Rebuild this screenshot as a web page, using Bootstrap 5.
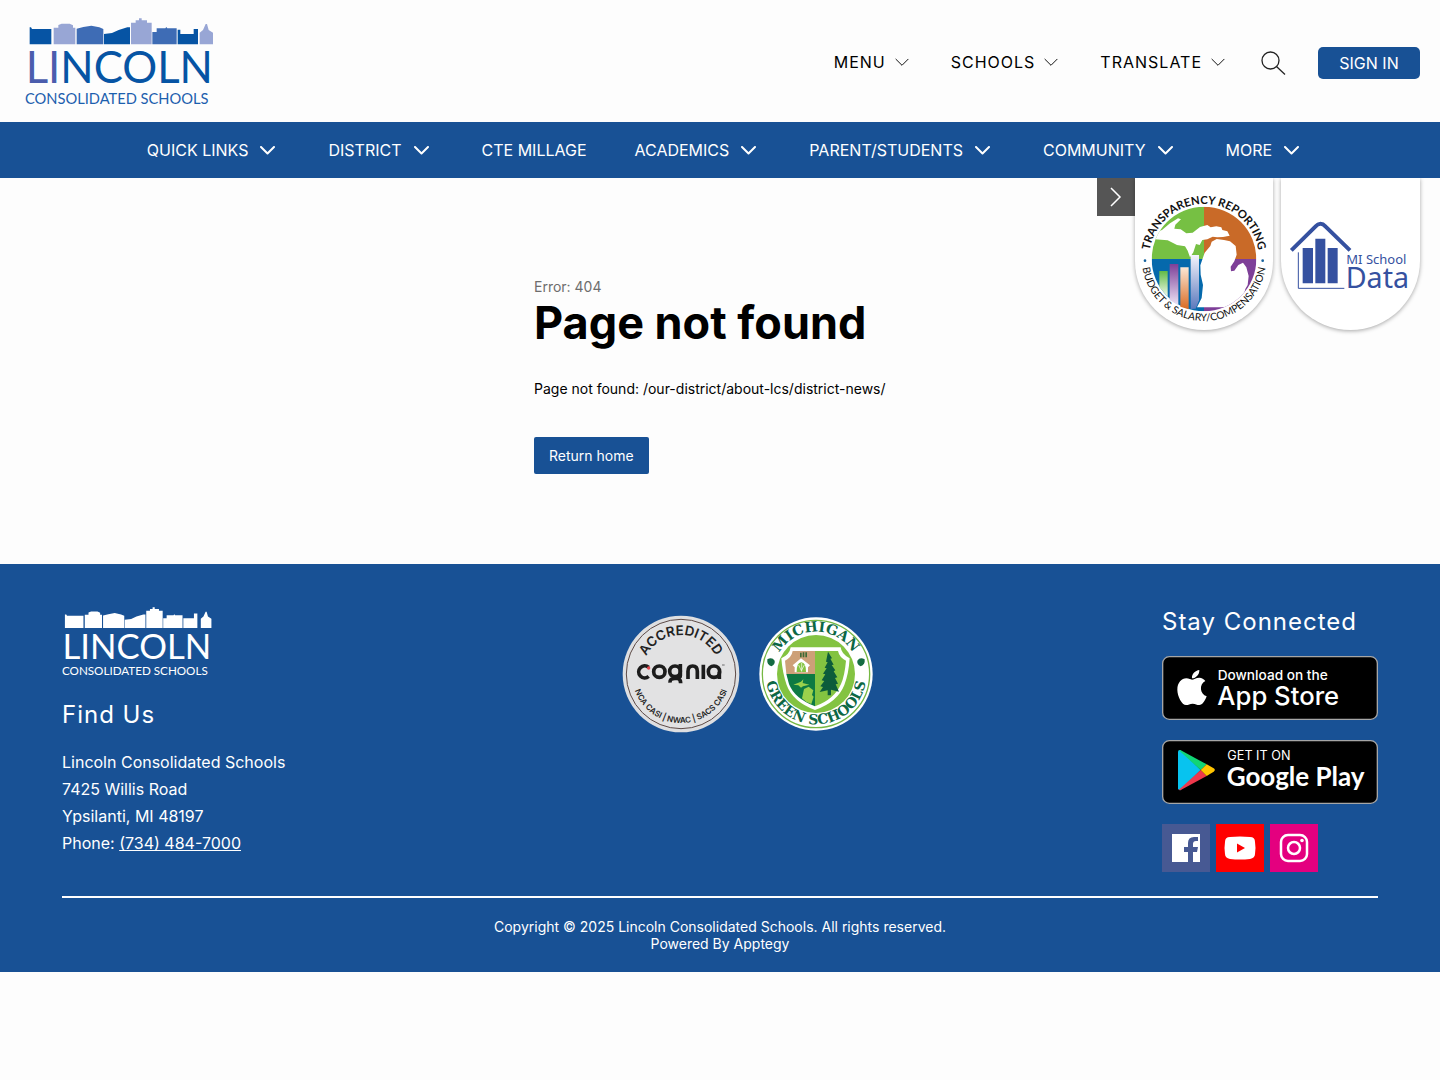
<!DOCTYPE html>
<html lang="en">
<head>
<meta charset="utf-8">
<meta name="viewport" content="width=device-width, initial-scale=1">
<title>Page not found | Lincoln Consolidated Schools</title>
<link href="https://cdn.jsdelivr.net/npm/bootstrap@5.3.0/dist/css/bootstrap.min.css" rel="stylesheet">
<style>
  :root { --brand: #185195; }
  body { font-family: Inter, "Liberation Sans", sans-serif; color: #000; background: #fdfdfd; }
  svg { display: block; flex: none; }
  .bg-brand { background: var(--brand); }
  .site-top { min-height: 122px; padding: 18px 20px 16px 25px; }
  .top-link { letter-spacing: 1px; line-height: 24px; color: #000; gap: 9px; }
  .top-tools { gap: 42px; }
  .tool-end { gap: 32px; margin-left: -6px; padding-top: 2px; }
  .btn-sign { background: var(--brand); color: #fff; border: 0; border-radius: 5px; width: 102px; height: 32px; padding: 0; }
  .site-nav { min-height: 56px; padding-left: 6px; }
  .site-nav ul { gap: 12px 48px; }
  .site-nav a { color: #fff; gap: 12px; line-height: 24px; }
  .site-nav .has-menu { margin-right: 5px; }
  .site-nav .has-menu:last-child { margin-right: 0; }
  .drawer { right: 20px; top: 0; }
  .drawer-toggle { width: 38px; height: 38px; background: #555; border: 0; padding: 0; }
  .drawer-card { background: #fff; border-radius: 0 0 70px 70px; box-shadow: 0 1px 4px rgba(0,0,0,.35); overflow: hidden; clip-path: inset(0 -8px -8px -8px); }
  .error-area { min-height: 386px; padding-top: 100px; }
  .error-box { width: 372px; font-size: 14px; line-height: 18px; }
  .error-code { color: #6d6d6d; }
  .error-box h1 { font-size: 45px; line-height: 54px; font-weight: 700; margin: 0 0 30px; }
  .error-box p { margin-bottom: 39px; }
  .btn-home { background: var(--brand); color: #fff; font-size: 14px; line-height: 21px; padding: 8px 15px; border: 0; border-radius: 2px; }
  .site-foot { padding: 43px 62px 20px; color: #fff; }
  .site-foot h2 { font-size: 24px; line-height: 30px; font-weight: 400; letter-spacing: 1px; margin: 0; }
  .find-us { width: 324px; }
  .find-us h2 { margin: 23px 0 19px; }
  .find-us address { line-height: 27px; margin: 0; }
  .connect { width: 216px; }
  .store-link { margin: 19px 0 20px; }
  .store-link + .store-link { margin-top: 0; }
  .socials { gap: 6px; }
  .seals { gap: 19px; margin-right: 53px; padding-top: 8px; }
  .rule { border-top: 2px solid #fff; margin-top: 24px; padding-top: 20px; font-size: 14px; line-height: 17px; }
  .lato { font-family: Lato, sans-serif; }
</style>
</head>
<body>
<svg width="0" height="0" class="position-absolute" aria-hidden="true">
  <symbol id="chev" viewBox="0 0 15 9"><path d="M1 1l6.500 6.500L14 1" fill="none" stroke="currentColor" stroke-linecap="round" stroke-linejoin="round"/></symbol>
</svg>

<header class="site-top d-flex flex-wrap align-items-center justify-content-between">
  <a href="#" aria-label="Lincoln Consolidated Schools">
    <svg width="190" height="88" viewBox="45 24 570 264">
      <path fill="#0654a4" d="M59 52h4l3 5h58v46H59zM282 103V72l24-3 20-9 26-8h8v51zM503 59h8v13h40V57h13v46h-61z"/>
      <path fill="#98a6d5" d="M131 103V53h14v-8l10-4h24l10 5v7h7v50zM363 103V38h14v-7h10v-6h8v6h16v7h14v65zM569 103V68l10-8 8-18h4l5 18 13 8v35z"/>
      <path fill="#3e6cb5" d="M200 103V56l20-5 24-4 24 5 12 5v46zM427 103V66h13V55h26l3-4 3 4h28v48z"/>
      <g class="lato" font-size="131"><text x="47" y="219" fill="#0654a4"><tspan fill="#4b5dad">LI</tspan>NCOLN</text></g>
      <text class="lato" x="45" y="281" font-size="44" fill="#1c5fae">CONSOLIDATED SCHOOLS</text>
    </svg>
  </a>
  <div class="top-tools d-flex flex-wrap align-items-center">
    <a href="#" class="top-link d-flex align-items-center text-decoration-none">MENU <svg width="14" height="9" stroke-width="1"><use href="#chev"/></svg></a>
    <a href="#" class="top-link d-flex align-items-center text-decoration-none">SCHOOLS <svg width="14" height="9" stroke-width="1"><use href="#chev"/></svg></a>
    <a href="#" class="top-link d-flex align-items-center text-decoration-none">TRANSLATE <svg width="14" height="9" stroke-width="1"><use href="#chev"/></svg></a>
    <div class="tool-end d-flex align-items-center">
      <button type="button" class="btn p-0 border-0" aria-label="Search"><svg width="25" height="24" viewBox="0 0 25 24" fill="none" stroke="#222" stroke-width="1.300"><circle cx="9.500" cy="9.500" r="8.500"/><path d="M15.500 15.500L24 23.500"/></svg></button>
      <button type="button" class="btn-sign">SIGN IN</button>
    </div>
  </div>
</header>

<nav class="site-nav bg-brand d-flex align-items-center justify-content-center" aria-label="Main">
  <ul class="list-unstyled d-flex flex-wrap justify-content-center m-0">
    <li class="has-menu"><a href="#" class="d-flex align-items-center text-decoration-none">QUICK LINKS <svg width="15" height="9" stroke-width="2"><use href="#chev"/></svg></a></li>
    <li class="has-menu"><a href="#" class="d-flex align-items-center text-decoration-none">DISTRICT <svg width="15" height="9" stroke-width="2"><use href="#chev"/></svg></a></li>
    <li><a href="#" class="d-flex align-items-center text-decoration-none">CTE MILLAGE</a></li>
    <li class="has-menu"><a href="#" class="d-flex align-items-center text-decoration-none">ACADEMICS <svg width="15" height="9" stroke-width="2"><use href="#chev"/></svg></a></li>
    <li class="has-menu"><a href="#" class="d-flex align-items-center text-decoration-none">PARENT/STUDENTS <svg width="15" height="9" stroke-width="2"><use href="#chev"/></svg></a></li>
    <li class="has-menu"><a href="#" class="d-flex align-items-center text-decoration-none">COMMUNITY <svg width="15" height="9" stroke-width="2"><use href="#chev"/></svg></a></li>
    <li class="has-menu"><a href="#" class="d-flex align-items-center text-decoration-none">MORE <svg width="15" height="9" stroke-width="2"><use href="#chev"/></svg></a></li>
  </ul>
</nav>

<main class="error-area position-relative d-flex justify-content-center align-items-start">
  <div class="error-box">
    <div class="error-code">Error: 404</div>
    <h1>Page not found</h1>
    <p>Page not found: /our-district/about-lcs/district-news/</p>
    <a href="#" class="btn btn-home">Return home</a>
  </div>

  <aside class="drawer position-absolute d-flex align-items-start" aria-label="Reporting links">
    <button type="button" class="drawer-toggle d-flex align-items-center justify-content-center" aria-label="Hide links"><svg width="12" height="20" viewBox="0 0 12 20" fill="none" stroke="#fff" stroke-width="1.500"><path d="M1 1l9 9-9 9"/></svg></button>
    <a href="#" class="drawer-card me-2" aria-label="Transparency Reporting">
      <svg width="138" height="152" viewBox="135 24 414 456">
        <defs>
          <clipPath id="disc"><circle cx="342" cy="267" r="157"/></clipPath>
          <linearGradient id="g1" x2="0" y2="1"><stop stop-color="#62bb46"/><stop offset="1" stop-color="#f3faed"/></linearGradient>
          <linearGradient id="g2" x2="0" y2="1"><stop stop-color="#7d3f98"/><stop offset="1" stop-color="#eee4f5"/></linearGradient>
          <linearGradient id="g3" x2="0" y2="1"><stop stop-color="#fbe7d5"/><stop offset="1" stop-color="#d96a22"/></linearGradient>
          <linearGradient id="g4" x2="0" y2="1"><stop stop-color="#f4f4fc"/><stop offset="1" stop-color="#5b79bd"/></linearGradient>
          <path id="arcTop" d="M177 267a165 165 0 0 1 330 0"/>
          <path id="arcBottom" d="M156 267a186 186 0 0 0 372 0"/>
        </defs>
        <g clip-path="url(#disc)">
          <path fill="#76c043" d="M185 110h157v157H185z"/><path fill="#c96a28" d="M342 110h157v157H342z"/>
          <path fill="#0569ac" d="M185 267h157v157H185z"/><path fill="#7e3f98" d="M342 267h157v157H342z"/>
          <path fill="#fff" d="M185 207l3-18 28-9 24-20 24-15 9 3-17 16-3 12 19 2 17 12 19-2 22-17 22-6 10 7 17-3 15 3 3 8 15 4 7 13-20 4-17 1-14-2-16 8-15 2-8 15-11-3-8 25-10 15-7-20-8-13-24-4-28-14z"/>
          <path fill="#fff" d="M344 248l17-20 4-13 15-8 22 3 18 4 17 14 3 26-7 20-11 16 1 14 10-2 12-17 14-7 10 14 7 26-3 27-7 12-8 31-13 22-29 2H321l14-28 4-39-7-31-1-28z"/>
        </g>
        <path fill="url(#g1)" d="M208 303h25v78l-25-30z"/><path fill="url(#g2)" d="M239 282h26v124l-26-16z"/><path fill="url(#g3)" d="M271 292h25v126l-25-8z"/><path fill="url(#g4)" d="M302 255h25v136l-10 25-15 1z"/>
        <g class="lato" text-anchor="middle" fill="#111"><text font-size="34" font-weight="700"><textPath href="#arcTop" startOffset="50%">TRANSPARENCY REPORTING</textPath></text>
        <text font-size="31"><textPath href="#arcBottom" startOffset="50%">BUDGET &amp; SALARY/COMPENSATION</textPath></text></g>
        <circle cx="165" cy="272" r="4" fill="#17639f"/><circle cx="518" cy="272" r="4" fill="#17639f"/>
      </svg>
    </a>
    <a href="#" class="drawer-card" aria-label="MI School Data">
      <svg width="139" height="152" viewBox="573 24 417 456" fill="#3551a0">
        <path d="M604 241l72-71q15-17 31 0l73 71" fill="none" stroke="#3551a0" stroke-width="12"/>
        <path d="M638 234h31v106h-31zM676 206h30v134h-30zM713 234h30v106h-30z"/><path d="M625 247v108h138" fill="none" stroke="#3551a0" stroke-width="3"/>
        <g font-family="Noto Sans, sans-serif"><text x="769" y="282" font-size="39">MI School</text><text x="767" y="353" font-size="86">Data</text></g>
      </svg>
    </a>
  </aside>
</main>

<footer class="site-foot bg-brand">
  <div class="d-flex flex-wrap justify-content-between align-items-start">
    <section class="find-us">
      <svg width="151" height="70" viewBox="45 24 570 264" fill="#fff" role="img" aria-label="Lincoln Consolidated Schools">
        <path d="M56 52h5l3 5h62v46H56zM282 103V72l24-3 20-9 26-8h8v51zM503 66h40V48h13v55h-53zM131 103V53h14v-8l10-4h24l10 5v7h7v50zM363 103V38h14v-7h10v-6h8v6h16v7h14v65zM569 103V68l10-8 8-18h4l5 18 13 8v35zM200 103V56l20-5 24-4 24 5 12 5v46zM427 103V66h13V55h26l3-4 3 4h28v48z"/>
        <text class="lato" x="47" y="219" font-size="131">LINCOLN</text>
        <text class="lato" x="45" y="281" font-size="44">CONSOLIDATED SCHOOLS</text>
      </svg>
      <h2>Find Us</h2>
      <address>Lincoln Consolidated Schools<br>7425 Willis Road<br>Ypsilanti, MI 48197<br>Phone: <a href="tel:7344847000" class="text-white">(734) 484-7000</a></address>
    </section>

    <section class="seals d-flex align-items-center" aria-label="Accreditations">
      <svg width="118" height="118" viewBox="39 30 354 354">
        <defs><path id="cogTop" d="M99 207a117 117 0 0 1 234 0"/><path id="cogBottom" d="M69 207a147 147 0 0 0 294 0"/></defs>
        <circle cx="216" cy="207" r="175" fill="#dedfe1"/><circle cx="216" cy="207" r="164" fill="#e2e2e3" stroke="#5d4a46" stroke-width="3"/>
        <g font-family="Inter, sans-serif" text-anchor="middle" fill="#222"><text font-size="40" font-weight="600"><textPath href="#cogTop" startOffset="50%">ACCREDITED</textPath></text>
        <text font-size="24" font-weight="600"><textPath href="#cogBottom" startOffset="50%">NCA CASI | NWAC | SACS CASI</textPath></text></g>
        <g fill="none" stroke="#1c1c1c" stroke-width="11"><path d="M119 187a18 18 0 1 0 0 27"/><circle cx="151" cy="200" r="17"/><circle cx="198" cy="199" r="16"/><path d="M214 177v35q0 8-16 8t-15 13M206 220q9 3 9 15M237 222v-23q0-16 14-16t14 16v23M283 179v43M331 200v22"/><circle cx="315" cy="200" r="17"/></g>
        <circle cx="119" cy="189" r="5" fill="#e6444c"/><path d="M339 180h8" stroke="#333" stroke-width="2"/>
      </svg>
      <svg width="114" height="114" viewBox="449 33 342 342">
        <defs><path id="grTop" d="M493 204a127 127 0 0 1 254 0"/><path id="grBottom" d="M469 204a151 151 0 0 0 302 0"/></defs>
        <circle cx="620" cy="204" r="170" fill="#fff"/><circle cx="620" cy="204" r="161" fill="#fff" stroke="#76b843" stroke-width="4"/><circle cx="620" cy="204" r="117" fill="#83c341"/>
        <g font-family="DejaVu Serif, serif" font-weight="700" text-anchor="middle" fill="#0c6744" font-size="42"><text><textPath href="#grTop" startOffset="50%">MICHIGAN</textPath></text><text><textPath href="#grBottom" startOffset="50%">GREEN SCHOOLS</textPath></text></g>
        <path fill="#146b42" d="M474 160q14-8 22 4 2 11-10 17-14-5-12-21zM766 160q-14-8-22 4-2 11 10 17 14-5 12-21z"/>
        <path fill="#fff" d="M544 124h150q2 20 27 33-3 47-16 80-20 51-88 75-67-25-85-75-13-38-16-80 25-11 28-33z"/>
        <path fill="#cda078" d="M550 135h67v69h-86l-4-40q20-10 23-29z"/><path fill="#83c341" d="M617 135h69q4 19 24 29-4 45-15 70-20 46-78 67z"/><path fill="#0d7a43" d="M531 204h86v97q-62-24-78-67z"/>
        <path fill="#fff" d="M550 178l25-21 27 21-6 6v15h-40v-15z"/><path fill="#83c341" d="M562 198q0-28 14-29 14 1 14 29z"/><path d="M577 197v-26M568 177l8 17 9-17" fill="none" stroke="#fff" stroke-width="2"/><path fill="#3e6b35" d="M572 140h5v14h-5zm8-1h5v15h-5zm8 0h5v15h-5z"/>
        <path fill="#9bd14c" d="M552 236l23-9 7-7-2 11 20 5-19 5-6 4-8-7zM584 249l14-7 14 11-4 14 5 5-7 22-15-6-13-11z"/>
        <path fill="#0c5c3b" d="M656 137l12 20-5 1 10 18-6 1 11 16-5 3 11 18-7 2 9 17-7 2 10 22-24-6v17h-10v-15l-24 5 10-15-8-2 12-16-8-2 11-18-7-2 11-16-6-2 9-16-5-2z"/>
      </svg>
    </section>

    <section class="connect">
      <h2>Stay Connected</h2>
      <a href="#" class="store-link d-block" aria-label="Download on the App Store">
        <svg width="216" height="64" viewBox="36 183 648 192">
          <rect x="38" y="185" width="644" height="188" rx="20" fill="#000" stroke="#a6a6a6" stroke-width="4"/>
          <g fill="#fff"><path d="M148 225c1 13-10 25-22 25-2-12 10-24 22-25zM126 254c5 0 12-6 22-6 7 0 14 4 18 10-20 11-16 39 4 46-5 14-13 26-22 26-8 0-11-4-20-4-9 0-12 4-20 4-12 0-26-26-26-46 0-21 13-34 27-34 8 0 13 4 17 4z"/>
          <g font-family="Inter, sans-serif"><text x="203" y="254" font-size="41" font-weight="500">Download on the</text><text x="202" y="329" font-size="77" font-weight="500">App Store</text></g></g>
        </svg>
      </a>
      <a href="#" class="store-link d-block" aria-label="Get it on Google Play">
        <svg width="216" height="64" viewBox="36 435 648 192">
          <rect x="38" y="437" width="644" height="188" rx="20" fill="#000" stroke="#a6a6a6" stroke-width="4"/>
          <path fill="#08c3ef" d="M84 470q0-6 7-5l61 60-61 61q-7 0-7-6z"/><path fill="#11d576" d="M91 465l79 43-18 17-64-58z"/><path fill="#ee384c" d="M152 525l18 18-79 43-5-1z"/><path fill="#ffc400" d="M170 508l21 12q7 5 0 10l-21 13-18-18z"/>
          <g fill="#fff"><text x="232" y="494" font-size="38" font-family="Inter, sans-serif">GET IT ON</text><text x="230" y="574" class="lato" font-size="78" font-weight="700">Google Play</text></g>
        </svg>
      </a>
      <div class="socials d-flex">
        <a href="#" aria-label="Facebook"><svg width="48" height="48" viewBox="0 0 48 48"><path fill="#475993" d="M0 0h48v48H0z"/><path fill="#fff" d="M10 10h28v28h-7V28h4l1-5h-5v-3q0-3 3-3h2v-4h-4q-6 0-6 6v4h-4v5h4v10H10z"/></svg></a>
        <a href="#" aria-label="YouTube"><svg width="48" height="48" viewBox="0 0 48 48"><path fill="#f00" d="M0 0h48v48H0z"/><path fill="#fff" d="M14 13q10-1 20 0 5 0 5 5 1 6 0 12 0 4-5 5-10 1-20 0-5-1-5-5-1-6 0-12 0-5 5-5z"/><path fill="#f00" d="M21 19.500v9l8-4.500z"/></svg></a>
        <a href="#" aria-label="Instagram"><svg width="48" height="48" viewBox="0 0 48 48"><path fill="#e4007f" d="M0 0h48v48H0z"/><g fill="none" stroke="#fff" stroke-width="2.500"><rect x="11" y="11" width="26" height="26" rx="7"/><circle cx="24" cy="24" r="6"/></g><circle cx="32" cy="16.500" r="1.800" fill="#fff"/></svg></a>
      </div>
    </section>
  </div>
  <div class="rule text-center">Copyright © 2025 Lincoln Consolidated Schools. All rights reserved.<br>Powered By <a href="#" class="text-white text-decoration-none">Apptegy</a></div>
</footer>
<script src="https://cdn.jsdelivr.net/npm/bootstrap@5.3.0/dist/js/bootstrap.bundle.min.js"></script>
</body>
</html>
